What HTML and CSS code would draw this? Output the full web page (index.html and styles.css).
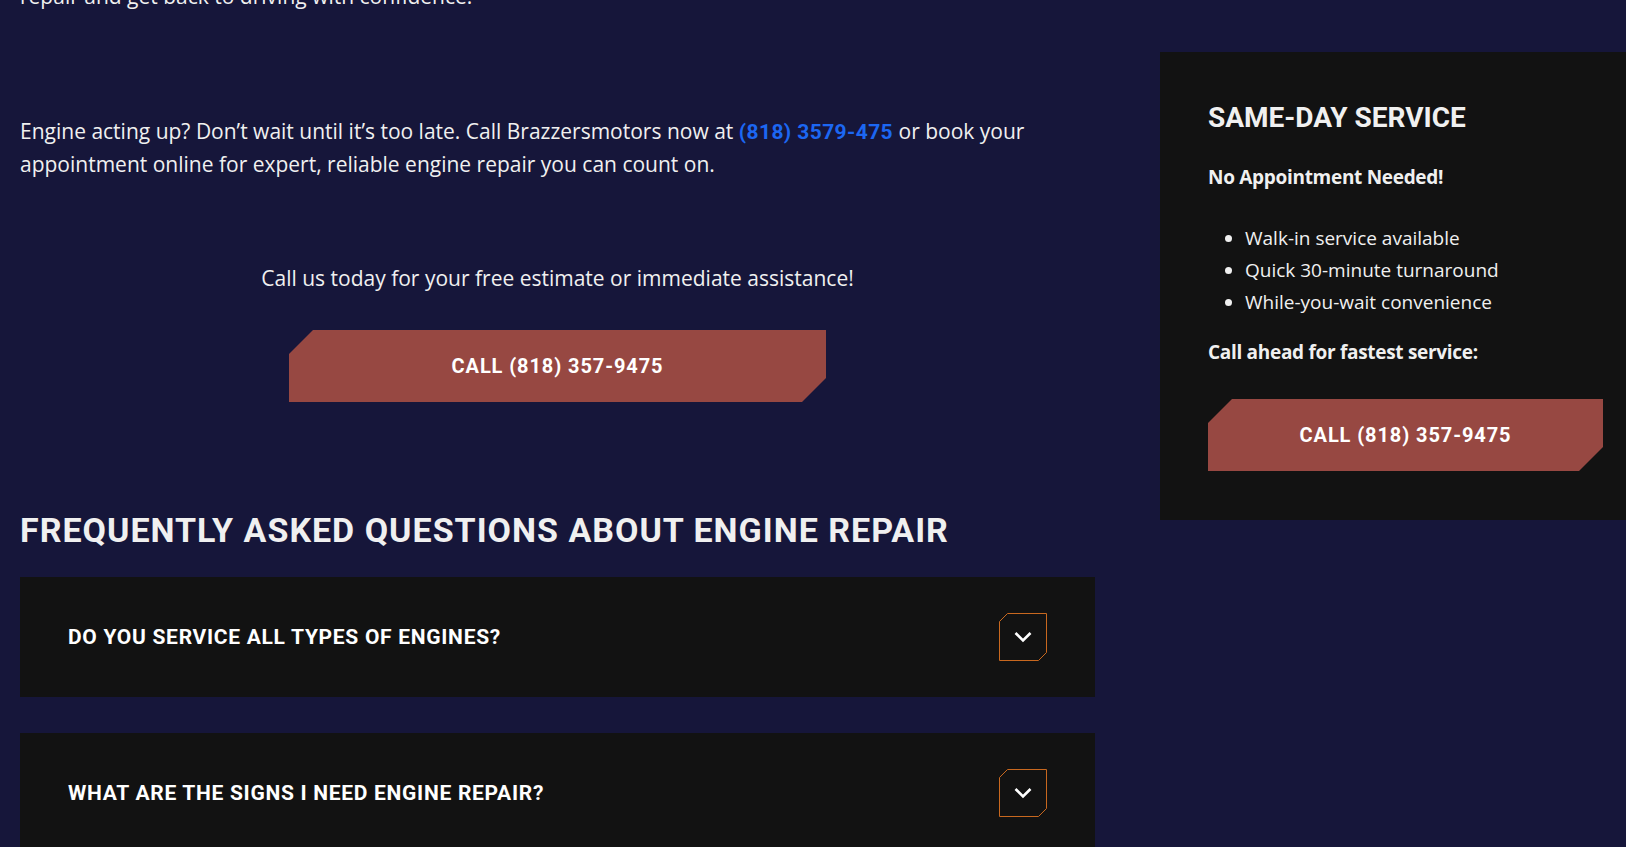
FILE: index.html
```html
<!DOCTYPE html>
<html lang="en">
<head>
    <meta charset="UTF-8">
    <meta name="viewport" content="width=device-width, initial-scale=1.0">
    <title>Engine Repair | Brazzersmotors</title>
    <link rel="stylesheet" href="styles.css">
</head>
<body>

    <div class="page">
        <div class="main">
            <p class="intro">repair and get back to driving with confidence.</p>

            <p class="lead">
                Engine acting up? Don’t wait until it’s too late. Call Brazzersmotors now at
                <a href="tel:8183579475" class="phone-link">(818) 3579-475</a> or book your
                appointment online for expert, reliable engine repair you can count on.
            </p>

            <div class="cta">
                <p>Call us today for your free estimate or immediate assistance!</p>
                <a href="tel:8183579475" class="btn-call">CALL (818) 357-9475</a>
            </div>

            <h2 class="faq-title">FREQUENTLY ASKED QUESTIONS ABOUT ENGINE REPAIR</h2>

            <div class="faq-list">
                <div class="faq-item">
                    <span class="faq-question">DO YOU SERVICE ALL TYPES OF ENGINES?</span>
                    <button class="faq-toggle" aria-label="Expand">
                        <svg width="48" height="48" viewBox="0 0 48 48">
                            <polygon points="8.5,0.5 47.5,0.5 47.5,39.5 39.5,47.5 0.5,47.5 0.5,8.5" fill="none" stroke="#c8681f"/>
                            <polyline points="16.5,20 24,27.5 31.5,20" fill="none" stroke="#fff" stroke-width="2.6"/>
                        </svg>
                    </button>
                </div>
                <div class="faq-item">
                    <span class="faq-question">WHAT ARE THE SIGNS I NEED ENGINE REPAIR?</span>
                    <button class="faq-toggle" aria-label="Expand">
                        <svg width="48" height="48" viewBox="0 0 48 48">
                            <polygon points="8.5,0.5 47.5,0.5 47.5,39.5 39.5,47.5 0.5,47.5 0.5,8.5" fill="none" stroke="#c8681f"/>
                            <polyline points="16.5,20 24,27.5 31.5,20" fill="none" stroke="#fff" stroke-width="2.6"/>
                        </svg>
                    </button>
                </div>
            </div>
        </div>

        <aside class="sidebar">
            <h3>SAME-DAY SERVICE</h3>
            <p class="strong">No Appointment Needed!</p>
            <ul>
                <li>Walk-in service available</li>
                <li>Quick 30-minute turnaround</li>
                <li>While-you-wait convenience</li>
            </ul>
            <p class="strong">Call ahead for fastest service:</p>
            <a href="tel:8183579475" class="btn-call btn-wide">CALL (818) 357-9475</a>
        </aside>
    </div>

</body>
</html>
```

FILE: styles.css
```css
html, body {
    overflow-x: hidden;
}

body {
    margin: 0;
    background-color: #16163a;
    color: #f0f0f0;
    font-family: "Open Sans", Lato, sans-serif;
    font-size: 21px;
}

.page {
    display: flex;
    align-items: flex-start;
    gap: 65px;
    padding-left: 20px;
}

.main {
    width: 1075px;
    flex-shrink: 0;
}

.main p {
    margin: 0;
    line-height: 33px;
}

.intro {
    margin-top: -20px !important;
}

.lead {
    margin-top: 102px !important;
}

.phone-link {
    font-family: Roboto, sans-serif;
    font-weight: 700;
    line-height: 1;
    letter-spacing: 0.4px;
    color: #1c67f2;
    text-decoration: none;
}

.cta {
    display: flex;
    flex-direction: column;
    align-items: center;
    margin-top: 81px;
}

.cta .btn-call {
    margin-top: 35px;
    width: 537px;
}

.btn-call {
    display: flex;
    align-items: center;
    justify-content: center;
    height: 72px;
    background-color: #974842;
    color: #fff;
    font-family: Roboto, sans-serif;
    font-weight: 700;
    font-size: 20px;
    letter-spacing: 0.9px;
    text-decoration: none;
    clip-path: polygon(24px 0, 100% 0, 100% calc(100% - 24px), calc(100% - 24px) 100%, 0 100%, 0 24px);
}

.faq-title {
    margin: 107px 0 26px;
    font-family: Roboto, sans-serif;
    font-weight: 700;
    font-size: 34px;
    line-height: 42px;
    letter-spacing: 1px;
    color: #f0f0f0;
}

.faq-list {
    display: flex;
    flex-direction: column;
    gap: 36px;
}

.faq-item {
    display: flex;
    align-items: center;
    justify-content: space-between;
    height: 120px;
    padding: 0 48px;
    background-color: #121212;
}

.faq-question {
    font-family: Roboto, sans-serif;
    font-weight: 700;
    font-size: 21px;
    letter-spacing: 0.7px;
    color: #fff;
}

.faq-toggle {
    padding: 0;
    border: none;
    background: none;
    width: 48px;
    height: 48px;
    cursor: pointer;
}

.faq-toggle svg {
    display: block;
}

.sidebar {
    width: 491px;
    flex-shrink: 0;
    box-sizing: border-box;
    margin-top: 52px;
    padding: 49px 48px 49px;
    background-color: #121212;
}

.sidebar h3 {
    margin: 0;
    font-family: Roboto, sans-serif;
    font-weight: 700;
    font-size: 28px;
    line-height: 34px;
}

.sidebar p {
    margin: 0;
    line-height: 32px;
    font-size: 19px;
}

.sidebar .strong {
    font-weight: 700;
    letter-spacing: -0.3px;
}

.sidebar h3 + .strong {
    margin-top: 26px;
}

.sidebar ul {
    margin: 29px 0 18px;
    padding-left: 37px;
    font-size: 19px;
    line-height: 32px;
}

.sidebar .btn-wide {
    margin-top: 31px;
}
```
